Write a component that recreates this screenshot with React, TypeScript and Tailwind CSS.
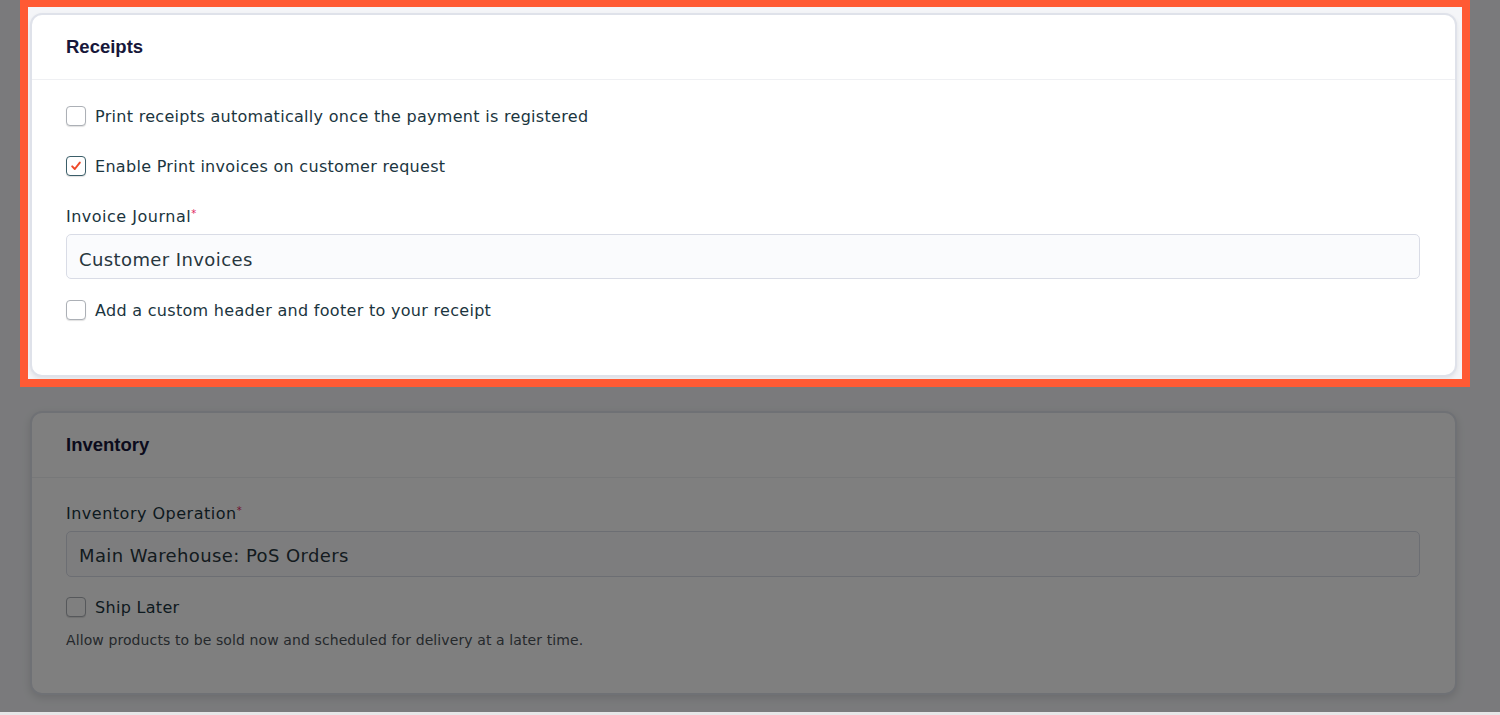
import React from "react";

const body = { fontFamily: '"DejaVu Sans", Verdana, sans-serif' };
const head = { fontFamily: '"Liberation Sans", Arial, sans-serif' };

function Box({ checked = false }: { checked?: boolean }) {
  return (
    <span
      className={
        "flex h-[20px] w-[20px] shrink-0 items-center justify-center rounded-[4px] border-[1.5px] bg-white shadow-[0_1px_1px_rgba(0,0,0,0.12)] " +
        (checked ? "border-[#3b5e69]" : "border-[#acb0b6]")
      }
    >
      {checked && (
        <svg width="12" height="12" viewBox="0 0 12 12" fill="none">
          <path d="M2.2 6.4 L4.8 9 L9.8 2.6" stroke="#ef4a2a" strokeWidth="2" strokeLinecap="round" strokeLinejoin="round" />
        </svg>
      )}
    </span>
  );
}

function Check({ label, checked = false }: { label: string; checked?: boolean }) {
  return (
    <div className="flex h-[20px] items-center gap-[9px]">
      <Box checked={checked} />
      <span className="pt-[1px] text-[16px] leading-[20px] tracking-[0.3px] text-[#1b3540]">{label}</span>
    </div>
  );
}

function Label({ text }: { text: string }) {
  return (
    <div className="h-[20px] pt-[1px] text-[16px] leading-[20px] tracking-[0.5px] text-[#1b3540]">
      {text}
      <span className="relative -top-[5px] text-[10px] text-[#e0245e]">*</span>
    </div>
  );
}

function Input({ value, h, pt }: { value: string; h: string; pt: string }) {
  return (
    <div className={"flex w-[1354px] items-center rounded-[5px] border border-[#d9dce6] bg-[#fafbfd] pl-[12px] text-[18px] tracking-[0.4px] text-[#28363e] " + h + " " + pt}>
      {value}
    </div>
  );
}

export default function App() {
  return (
    <div className="h-screen w-full bg-[#e6e6e7]" style={body}>
      <div className="relative h-[712px] w-full overflow-hidden bg-[#f4f5f8]">
        <div className="flex flex-col pl-[30px] pt-[13px]">
          {/* Receipts card */}
          <div className="relative w-[1427px]">
            <div className="pointer-events-none absolute -left-[10px] -right-[13px] -top-[14px] -bottom-[10px] z-20 border-[8px] border-[#ff5a34] shadow-[0_0_0_4000px_rgba(0,0,0,0.5)]" />
            <div className="relative z-10 flex h-[364px] flex-col rounded-[12px] border-2 border-[#dfe2ea] bg-white shadow-[0_2px_4px_rgba(0,0,0,0.08)]">
              <div className="flex h-[65px] items-center border-b border-[#eff0f3] pl-[34px]">
                <span className="text-[18.5px] font-bold text-[#17173a]" style={head}>Receipts</span>
              </div>
              <div className="flex flex-col pl-[34px] pt-[26px]">
                <Check label="Print receipts automatically once the payment is registered" />
                <div className="mt-[30px]">
                  <Check label="Enable Print invoices on customer request" checked />
                </div>
                <div className="mt-[30px]">
                  <Label text="Invoice Journal" />
                </div>
                <div className="mt-[8px]">
                  <Input value="Customer Invoices" h="h-[45px]" pt="pt-[5px]" />
                </div>
                <div className="mt-[21px]">
                  <Check label="Add a custom header and footer to your receipt" />
                </div>
              </div>
            </div>
          </div>

          {/* Inventory card */}
          <div className="mt-[34px] flex h-[284px] w-[1427px] flex-col rounded-[12px] border-2 border-[#dfe2ea] bg-white shadow-[0_3px_8px_rgba(0,0,0,0.12)]">
            <div className="flex h-[65px] items-center border-b border-[#eff0f3] pl-[34px]">
              <span className="text-[18.5px] font-bold text-[#17173a]" style={head}>Inventory</span>
            </div>
            <div className="flex flex-col pl-[34px] pt-[25px]">
              <Label text="Inventory Operation" />
              <div className="mt-[8px]">
                <Input value="Main Warehouse: PoS Orders" h="h-[46px]" pt="pt-[2px]" />
              </div>
              <div className="mt-[20px]">
                <Check label="Ship Later" />
              </div>
              <div className="mt-[15px] text-[14px] leading-[16px] tracking-[0.1px] text-[#4b5258]">
                Allow products to be sold now and scheduled for delivery at a later time.
              </div>
            </div>
          </div>
        </div>
      </div>
    </div>
  );
}
